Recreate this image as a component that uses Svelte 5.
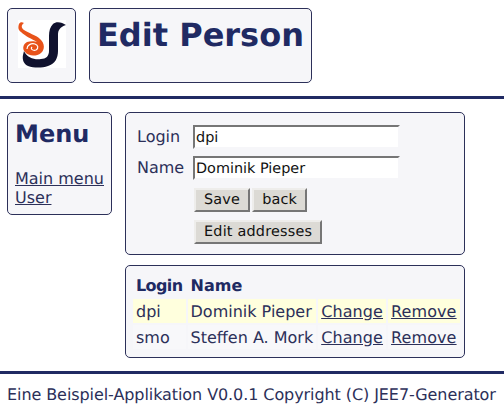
<script>
  const persons = [
    { login: 'dpi', name: 'Dominik Pieper' },
    { login: 'smo', name: 'Steffen A. Mork' }
  ];
</script>

<div class="page">
  <header class="top">
    <div class="box logo">
      <svg width="48" height="48" viewBox="0 0 48 48">
        <rect width="48" height="48" fill="#fff" />
        <path d="M48 5C44 2 38 1 35 4 32 7 31 11 31 16V31C31 36 28 39 23 39 17 40 9 38 6 31L5 35C4 40 6 44 10 46 16 48 24 48 30 46 37 44 40 38 40 31V15C40 10 42 7 48 5Z" fill="#10122e" />
        <path d="M1 4C2 2 4 2 6 3 3 5 3 8 6 10 10 13 18 15 22 19 27 23 27 30 23 33 18 37 10 36 7 32 4 29 5 24 9 22 12 21 17 21 19 22 14 19 7 16 3 12 0 10 0 7 1 4Z" fill="#e8531a" />
        <path d="M9 29C9 25 13 23 17 24 20 25 21 28 18 30 15 31 12 29 14 27" fill="none" stroke="#fff" stroke-width="1.2" />
      </svg>
    </div>
    <div class="box title">
      <h1>Edit Person</h1>
    </div>
  </header>

  <hr />

  <div class="main">
    <nav class="box menu">
      <h2>Menu</h2>
      <a href="#main">Main menu</a>
      <a href="#user">User</a>
    </nav>

    <div class="content">
      <form class="box form" on:submit|preventDefault>
        <div class="row">
          <label for="login">Login</label>
          <input id="login" value="dpi" />
        </div>
        <div class="row">
          <label for="name">Name</label>
          <input id="name" value="Dominik Pieper" />
        </div>
        <div class="actions first">
          <button type="button">Save</button>
          <button type="button">back</button>
        </div>
        <div class="actions">
          <button type="button">Edit addresses</button>
        </div>
      </form>

      <div class="box list">
        <table>
          <thead>
            <tr>
              <th>Login</th>
              <th>Name</th>
              <th></th>
              <th></th>
            </tr>
          </thead>
          <tbody>
            {#each persons as p, i}
              <tr class:odd={i % 2 === 0}>
                <td>{p.login}</td>
                <td>{p.name}</td>
                <td><a href="#change">Change</a></td>
                <td><a href="#remove">Remove</a></td>
              </tr>
            {/each}
          </tbody>
        </table>
      </div>
    </div>
  </div>

  <hr />

  <footer>Eine Beispiel-Applikation V0.0.1 Copyright (C) JEE7-Generator</footer>
</div>

<style>
  :global(body) {
    background: #fff;
    color: #2c3059;
    font-family: "DejaVu Sans", sans-serif;
    font-size: 16px;
    text-rendering: geometricPrecision;
  }

  .page {
    width: 504px;
    height: 412px;
    overflow: hidden;
  }

  .box {
    background: #f6f6f9;
    border: 1px solid #2c3059;
    border-radius: 5px;
    box-sizing: border-box;
  }

  .top {
    display: flex;
    gap: 13px;
    padding: 8px 7px 0;
  }

  .logo {
    width: 69px;
    height: 75px;
    padding: 11px 0 0 10px;
  }

  .logo svg {
    display: block;
  }

  .title {
    width: 223px;
    height: 75px;
    padding: 7px;
  }

  h1 {
    margin: 0;
    color: #202a63;
    font-size: 32px;
    line-height: 38px;
    font-weight: bold;
  }

  hr {
    margin: 13px 0 0;
    height: 3px;
    border: 0;
    background: #202a63;
  }

  .main {
    display: flex;
    align-items: flex-start;
    gap: 13px;
    padding: 13px 7px 0;
    height: 259px;
    box-sizing: border-box;
  }

  .menu {
    width: 105px;
    height: 103px;
    padding: 7px;
  }

  .menu a {
    display: block;
    line-height: 19px;
  }

  h2 {
    margin: 0 0 20px;
    color: #202a63;
    font-size: 24px;
    line-height: 29px;
  }

  a {
    color: #2c3059;
  }

  .content {
    display: flex;
    flex-direction: column;
    gap: 10px;
  }

  .form {
    width: 340px;
    height: 143px;
    padding: 12px 11px;
  }

  .row {
    display: flex;
    align-items: center;
    height: 24px;
    margin-bottom: 7px;
  }

  label {
    width: 56px;
    margin-top: -1px;
  }

  input {
    width: 207px;
    height: 24px;
    box-sizing: border-box;
    padding: 2px 1px 0;
    border: 2px solid;
    border-color: #767676 #f6f6f9 #f6f6f9 #767676;
    background: #fff;
    color: #111;
    font-family: inherit;
    font-size: 14.4px;
    text-rendering: geometricPrecision;
  }

  .actions {
    display: flex;
    gap: 2px;
    margin: 0 0 8px 57px;
  }

  .first {
    margin-top: 8px;
  }

  button {
    height: 24px;
    padding: 1px 8px;
    border: 2px solid;
    border-color: #eeedeb #767676 #767676 #eeedeb;
    background: #dcdad5;
    color: #111;
    font-family: inherit;
    font-size: 14.4px;
    letter-spacing: 0.2px;
    text-rendering: geometricPrecision;
  }

  .list {
    width: 340px;
    height: 93px;
    padding: 5px;
  }

  table {
    border-collapse: separate;
    border-spacing: 2px;
  }

  th {
    text-align: left;
    padding: 4px 3px 2px;
    line-height: 18px;
    color: #202a63;
  }

  th:first-child {
    letter-spacing: -0.6px;
  }

  td {
    padding: 4px 3px 2px;
    line-height: 18px;
    white-space: nowrap;
    background: #f8f8fa;
  }

  td a {
    letter-spacing: 0.1px;
  }

  .odd td {
    background: #ffffdd;
  }

  footer {
    padding: 11px 7px 0;
    line-height: 19px;
    white-space: nowrap;
    letter-spacing: -0.08px;
  }
</style>
